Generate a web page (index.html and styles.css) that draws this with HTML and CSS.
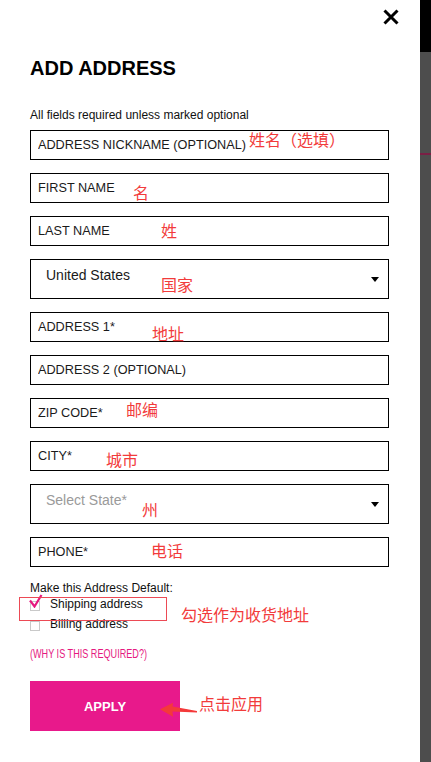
FILE: index.html
```html
<!DOCTYPE html>
<html lang="en">
<head>
  <meta charset="UTF-8">
  <title>Add Address</title>
  <link rel="stylesheet" href="styles.css">
</head>
<body>
  <div class="page">
    <div class="panel">
      <div class="close-row">
        <button class="close-btn" type="button" aria-label="Close">
          <svg width="16" height="16" viewBox="0 0 16 16">
            <path d="M1.5 1.5 L14.5 14.5 M14.5 1.5 L1.5 14.5" stroke="#000" stroke-width="3" fill="none"/>
          </svg>
        </button>
      </div>

      <h1 class="title">ADD ADDRESS</h1>
      <p class="hint">All fields required unless marked optional</p>

      <form class="address-form">
        <div class="fields">
          <div class="field">
            <input type="text" placeholder="ADDRESS NICKNAME (OPTIONAL)">
            <span class="note note-nick">姓名（选填）</span>
          </div>
          <div class="field">
            <input type="text" placeholder="FIRST NAME">
            <span class="note note-first">名</span>
          </div>
          <div class="field">
            <input type="text" placeholder="LAST NAME">
            <span class="note note-last">姓</span>
          </div>
          <div class="field select-field">
            <select>
              <option>United States</option>
            </select>
            <span class="note note-country">国家</span>
          </div>
          <div class="field">
            <input type="text" placeholder="ADDRESS 1*">
            <span class="note note-addr">地址</span>
          </div>
          <div class="field">
            <input type="text" placeholder="ADDRESS 2 (OPTIONAL)">
          </div>
          <div class="field">
            <input type="text" placeholder="ZIP CODE*">
            <span class="note note-zip">邮编</span>
          </div>
          <div class="field">
            <input type="text" placeholder="CITY*">
            <span class="note note-city">城市</span>
          </div>
          <div class="field select-field">
            <select class="empty">
              <option>Select State*</option>
            </select>
            <span class="note note-state">州</span>
          </div>
          <div class="field">
            <input type="text" placeholder="PHONE*">
            <span class="note note-phone">电话</span>
          </div>
        </div>

        <div class="defaults">
          <p class="defaults-label">Make this Address Default:</p>
          <div class="check-group">
            <label class="check-row">
              <span class="box">
                <svg class="tick" width="14" height="14" viewBox="0 0 14 14">
                  <path d="M1 6.5 L5.5 12.5 L12.5 1" stroke="#e5197f" stroke-width="2.2" fill="none"/>
                </svg>
              </span>
              Shipping address
            </label>
            <label class="check-row">
              <span class="box"></span>
              Billing address
            </label>
            <span class="note-frame"></span>
            <span class="note note-check">勾选作为收货地址</span>
          </div>
        </div>

        <a class="why-link" href="#">(WHY IS THIS REQUIRED?)</a>

        <div class="apply-row">
          <button type="button" class="apply-btn">APPLY</button>
          <svg class="arrow" width="42" height="20" viewBox="0 0 42 20">
            <polygon points="2,9.3 15,2.7 14.5,6.5 39,11 39,12.5 14.5,11.5 15,16.7" fill="#f4393a"/>
          </svg>
          <span class="note note-apply">点击应用</span>
        </div>
      </form>
    </div>

    <div class="scrollbar">
      <div class="thumb"></div>
      <div class="mark"></div>
    </div>
  </div>
</body>
</html>
```

FILE: styles.css
```css
body {
  margin: 0;
  background-color: #fff;
  font-family: 'Liberation Sans', Arial, sans-serif;
  color: #111;
  overflow: hidden;
}

.page {
  display: flex;
  height: 762px;
}

.panel {
  flex: 1;
  padding: 0 31px 0 30px;
}

.close-row {
  display: flex;
  justify-content: flex-end;
  padding-top: 9px;
  margin-right: -10px;
}

.close-btn {
  border: none;
  background: none;
  padding: 0;
  width: 16px;
  height: 16px;
  cursor: pointer;
}

.close-btn svg {
  display: block;
}

.title {
  margin: 31px 0 0;
  font-size: 20px;
  line-height: 24px;
  font-weight: bold;
  color: #000;
}

.hint {
  margin: 28px 0 0;
  font-size: 12px;
  line-height: 14px;
}

.address-form {
  margin-top: 8px;
}

.fields {
  display: flex;
  flex-direction: column;
  gap: 13px;
}

.field {
  position: relative;
}

.field input,
.field select {
  display: block;
  width: 100%;
  box-sizing: border-box;
  height: 30px;
  margin: 0;
  padding: 0 7px;
  border: 1px solid #000;
  border-radius: 0;
  background: #fff;
  font-family: 'Liberation Sans', Arial, sans-serif;
  font-size: 12.7px;
  color: #1a1a1a;
  outline: none;
}

.field input::placeholder {
  color: #1a1a1a;
  opacity: 1;
}

.field select {
  -webkit-appearance: none;
  appearance: none;
  height: 40px;
  padding: 0 30px 9px 15px;
  font-size: 14px;
}

.field select.empty {
  color: #9a9a9a;
}

.select-field::after {
  content: "";
  position: absolute;
  right: 10px;
  top: 18px;
  border-left: 4.5px solid transparent;
  border-right: 4.5px solid transparent;
  border-top: 5px solid #000;
  pointer-events: none;
}

.note {
  position: absolute;
  font-family: 'Noto Sans CJK SC', sans-serif;
  font-size: 16px;
  line-height: 16px;
  color: #f23b3b;
  white-space: nowrap;
  pointer-events: none;
}

.note-nick { left: 219px; top: 1px; }
.note-first { left: 103px; top: 11px; }
.note-last { left: 131px; top: 6px; }
.note-country { left: 131px; top: 17px; }
.note-addr { left: 122px; top: 13px; }
.note-zip { left: 96px; top: 3px; }
.note-city { left: 76px; top: 10px; }
.note-state { left: 112px; top: 17px; }
.note-phone { left: 121px; top: 5px; }
.note-check { left: 151px; top: 12px; }
.note-apply { left: 169px; top: 14px; }

.defaults {
  margin-top: 15px;
}

.defaults-label {
  margin: 0;
  font-size: 12px;
  line-height: 12px;
}

.check-group {
  position: relative;
}

.check-row {
  display: flex;
  align-items: center;
  gap: 10px;
  height: 20px;
  font-size: 12px;
  cursor: pointer;
}

.box {
  position: relative;
  width: 8px;
  height: 8px;
  margin-top: 4px;
  border: 1px solid #c9c9c9;
  background: #fff;
}

.tick {
  position: absolute;
  left: -2px;
  top: -8px;
}

.note-frame {
  position: absolute;
  left: -11px;
  top: 3px;
  width: 146px;
  height: 22px;
  border: 1px solid #ec4a55;
  pointer-events: none;
}

.why-link {
  display: inline-block;
  margin-top: 12px;
  font-size: 13px;
  line-height: 15px;
  color: #e5197f;
  text-decoration: none;
  transform: scaleX(0.7);
  transform-origin: left center;
}

.apply-row {
  position: relative;
  margin-top: 19px;
}

.apply-btn {
  display: block;
  width: 150px;
  height: 50px;
  border: none;
  border-radius: 0;
  background-color: #e8198b;
  color: #fff;
  font-family: 'Liberation Sans', Arial, sans-serif;
  font-size: 13px;
  font-weight: bold;
  cursor: pointer;
}

.arrow {
  position: absolute;
  left: 128px;
  top: 19px;
}

.scrollbar {
  width: 11px;
  background-color: #4d4d4d;
}

.thumb {
  height: 52px;
  background-color: #000;
}

.mark {
  margin-top: 101px;
  height: 2px;
  background-color: #7a1f45;
}
```
